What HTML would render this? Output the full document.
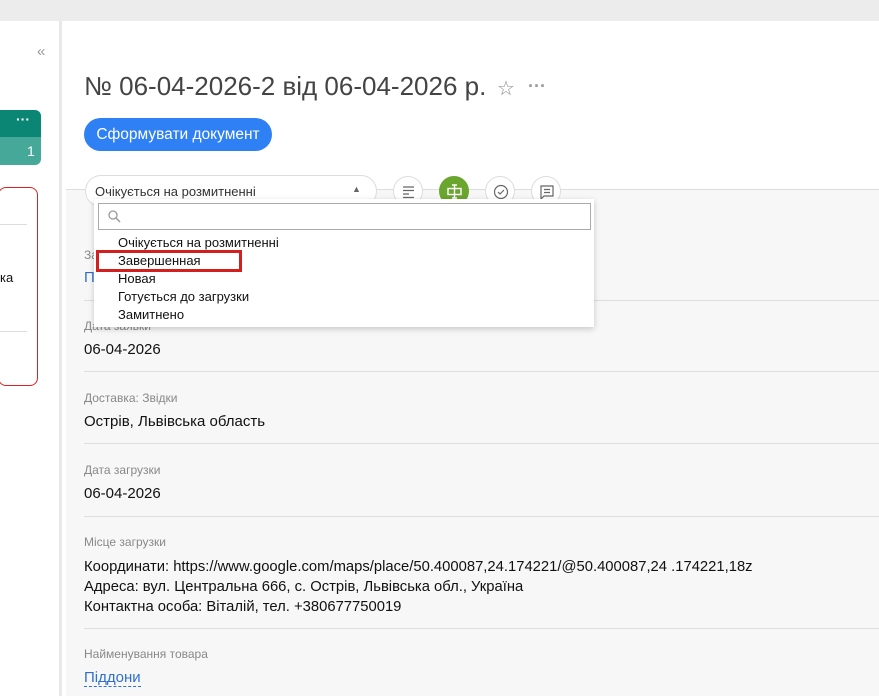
<!DOCTYPE html><html><head><meta charset="utf-8"><style>
*{box-sizing:border-box;margin:0;padding:0}
body{width:879px;height:696px;overflow:hidden;background:#ececec;font-family:"Segoe UI","Liberation Sans",sans-serif;position:relative;color:#111}
.abs{position:absolute}
.lbl{position:absolute;left:84px;font-size:12px;color:#888}
.val{position:absolute;left:84px;font-size:15px;color:#111}
.hr{position:absolute;left:84px;right:0;height:1px;background:#dedede}
.ic{position:absolute;top:176px;width:30px;height:30px;border-radius:50%;border:1px solid #ddd;background:#fff}
</style></head><body>
<div class="abs" style="left:0;top:21px;width:59px;height:675px;background:#fff"></div>
<div class="abs" style="left:59px;top:21px;width:3px;height:675px;background:#e8e8e8"></div>
<div class="abs" style="left:62px;top:21px;width:4px;height:675px;background:#fff"></div>
<div class="abs" style="left:37px;top:43px;font-size:15px;color:#999">«</div>
<div class="abs" style="left:0;top:110px;width:41px;height:27px;background:#0b8574;border-radius:0 6px 0 0"></div>
<div class="abs" style="left:16px;top:111px;color:#fff;font-size:14px;font-weight:bold">···</div>
<div class="abs" style="left:0;top:137px;width:41px;height:28px;background:#45a898;border-radius:0 0 6px 0"></div>
<div class="abs" style="left:27px;top:143px;color:#fff;font-size:14px">1</div>
<div class="abs" style="left:-2px;top:187px;width:40px;height:199px;border:1px solid #e02020;border-radius:8px;background:#fff"></div>
<div class="abs" style="left:0;top:224px;width:27px;height:1px;background:#ddd"></div>
<div class="abs" style="left:0;top:331px;width:27px;height:1px;background:#ddd"></div>
<div class="abs" style="left:0;top:270px;font-size:13px">ка</div>
<div class="abs" style="left:66px;top:21px;width:813px;height:168px;background:#fff"></div>
<div class="abs" style="left:66px;top:189px;width:813px;height:507px;background:#f7f7f7;border-top:1px solid #ddd"></div>
<div class="abs" style="left:84px;top:71px;font-size:26px;color:#444">№ 06-04-2026-2 від 06-04-2026 р.</div>
<div class="abs" style="left:497px;top:76px;font-size:20px;color:#888">☆</div>
<div class="abs" style="left:528px;top:76px;font-size:18px;color:#999;font-weight:bold">···</div>
<div class="abs" style="left:84px;top:118px;width:188px;height:33px;border-radius:17px;background:#2f80f5;color:#fff;font-size:15.5px;text-align:center;line-height:33px">Сформувати документ</div>
<div class="abs" style="left:85px;top:175px;width:292px;height:32px;border:1px solid #ddd;border-radius:16px;background:#fff;font-size:13px;color:#333;padding:8px 0 0 9px">Очікується на розмитненні<span style="position:absolute;left:266px;top:8px;font-size:9px;color:#666">▲</span></div>
<div class="ic" style="left:393px"><svg width="30" height="30"><path d="M9 10h11M9 13.5h11M9 17h6M9 20.5h11" stroke="#666" stroke-width="1.2"/></svg></div>
<div class="ic" style="left:439px;background:#6aa52e;border-color:#6aa52e"><svg width="30" height="30"><rect x="8" y="11.5" width="13" height="6" fill="none" stroke="#fff" stroke-width="1.4"/><path d="M14.5 8v13M12 8h5M12 21h5" stroke="#fff" stroke-width="1.4"/></svg></div>
<div class="ic" style="left:485px"><svg width="30" height="30"><circle cx="15" cy="15" r="6.5" fill="none" stroke="#666" stroke-width="1.2"/><path d="M12 15l2 2 4-4" fill="none" stroke="#666" stroke-width="1.2"/></svg></div>
<div class="ic" style="left:531px"><svg width="30" height="30"><path d="M9 9h12v10h-9l-3 3z" fill="none" stroke="#666" stroke-width="1.2"/><path d="M12 12.5h6M12 15.5h6" stroke="#666" stroke-width="1.2"/></svg></div>
<div class="lbl" style="top:391px">Доставка: Звідки</div><div class="val" style="top:413px">Острів, Львівська область</div><div class="hr" style="top:443px"></div>
<div class="lbl" style="top:463px">Дата загрузки</div><div class="val" style="top:485px">06-04-2026</div><div class="hr" style="top:516px"></div>
<div class="lbl" style="top:535px">Місце загрузки</div>
<div class="val" style="top:557px;line-height:20px;font-size:14.8px">Координати: https://www.google.com/maps/place/50.400087,24.174221/@50.400087,24 .174221,18z<br>Адреса: вул. Центральна 666, с. Острів, Львівська обл., Україна<br>Контактна особа: Віталій, тел. +380677750019</div>
<div class="hr" style="top:628px"></div>
<div class="lbl" style="top:647px">Найменування товара</div>
<div class="val" style="top:669px;color:#2f6fd0;border-bottom:1px dashed #2f6fd0">Піддони</div>
<div class="lbl" style="top:319px">Дата заявки</div><div class="val" style="top:341px">06-04-2026</div><div class="hr" style="top:371px"></div>
<div class="lbl" style="top:248px">За</div><div class="val" style="top:269px;color:#2f6fd0">П</div><div class="hr" style="top:300px"></div>
<div class="abs" style="left:94px;top:199px;width:500px;height:128px;background:#fff;box-shadow:0 2px 6px rgba(0,0,0,.2)"></div>
<div class="abs" style="left:98px;top:203px;width:493px;height:27px;border:1px solid #aaa;background:#fff"><svg width="20" height="20" style="position:absolute;left:6px;top:3px"><circle cx="8" cy="8" r="4" fill="none" stroke="#999" stroke-width="1.3"/><path d="M11 11l4 4" stroke="#999" stroke-width="1.5"/></svg></div>
<div class="abs" style="left:118px;top:234px;font-size:13px;line-height:18px;color:#111">Очікується на розмитненні<br>Завершенная<br>Новая<br>Готується до загрузки<br>Замитнено</div>
<div class="abs" style="left:96px;top:250px;width:146px;height:22px;border:3px solid #d41f1f"></div>
</body></html>
